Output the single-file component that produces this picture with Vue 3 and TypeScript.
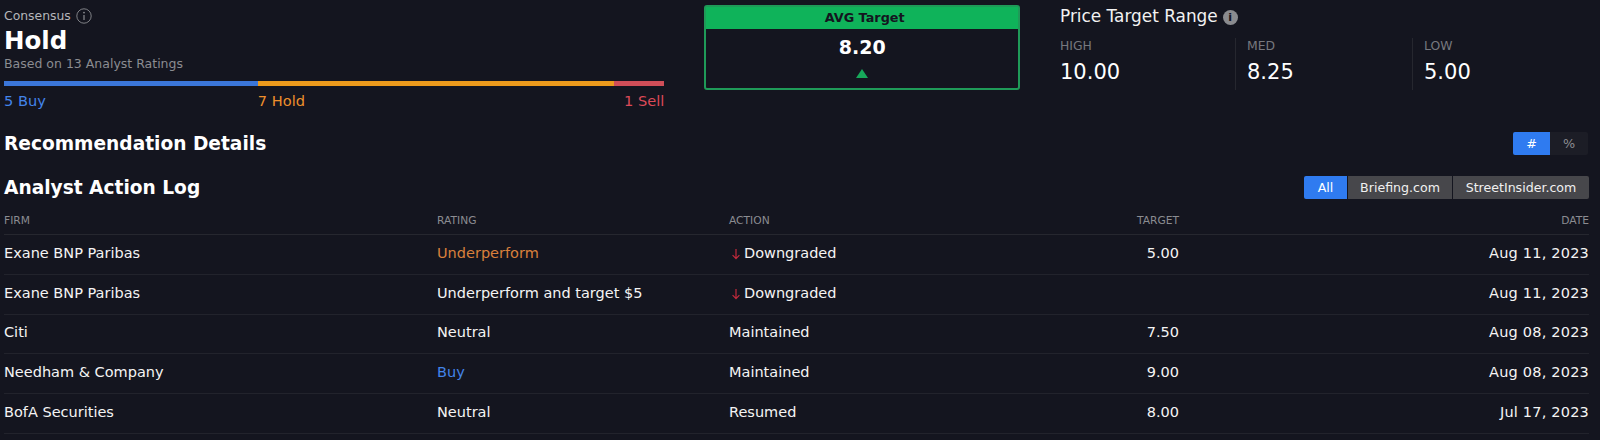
<script setup lang="ts">
interface Row { firm: string; rating: string; cls: string; action: string; down: boolean; target: string; date: string }
const rows: Row[] = [
  { firm: 'Exane BNP Paribas', rating: 'Underperform', cls: 'under', action: 'Downgraded', down: true, target: '5.00', date: 'Aug 11, 2023' },
  { firm: 'Exane BNP Paribas', rating: 'Underperform and target $5', cls: '', action: 'Downgraded', down: true, target: '', date: 'Aug 11, 2023' },
  { firm: 'Citi', rating: 'Neutral', cls: '', action: 'Maintained', down: false, target: '7.50', date: 'Aug 08, 2023' },
  { firm: 'Needham & Company', rating: 'Buy', cls: 'buy', action: 'Maintained', down: false, target: '9.00', date: 'Aug 08, 2023' },
  { firm: 'BofA Securities', rating: 'Neutral', cls: '', action: 'Resumed', down: false, target: '8.00', date: 'Jul 17, 2023' },
]
const ranges = [
  { label: 'HIGH', value: '10.00' },
  { label: 'MED', value: '8.25' },
  { label: 'LOW', value: '5.00' },
]
</script>

<template>
  <div class="page">
    <section class="top">
      <div class="consensus">
        <div class="cons-label">
          Consensus
          <svg class="info-o" viewBox="0 0 16 16" width="16" height="16">
            <circle cx="8" cy="8" r="7.2" fill="none" stroke="#8b8c91" stroke-width="0.9" />
            <circle cx="8" cy="4.6" r="0.9" fill="#8b8c91" />
            <path d="M8 7v5" stroke="#8b8c91" stroke-width="1.2" />
          </svg>
        </div>
        <div class="hold">Hold</div>
        <div class="based">Based on 13 Analyst Ratings</div>
        <div class="bar">
          <span class="seg s-buy"></span>
          <span class="seg s-hold"></span>
          <span class="seg s-sell"></span>
        </div>
        <div class="bar-labels">
          <span class="l-buy">5 Buy</span>
          <span class="l-hold">7 Hold</span>
          <span class="l-sell">1 Sell</span>
        </div>
      </div>
      <div class="avg">
        <div class="avg-head">AVG Target</div>
        <div class="avg-val">8.20</div>
        <div class="tri"></div>
      </div>
      <div class="range">
        <div class="range-title">
          Price Target Range
          <span class="info-f">i</span>
        </div>
        <div class="range-cols">
          <div v-for="r in ranges" :key="r.label" class="range-col">
            <div class="range-label">{{ r.label }}</div>
            <div class="range-val">{{ r.value }}</div>
          </div>
        </div>
      </div>
    </section>

    <div class="head-row rec">
      <h2>Recommendation Details</h2>
      <div class="toggle">
        <span class="t-on">#</span>
        <span class="t-off">%</span>
      </div>
    </div>

    <div class="head-row log">
      <h2>Analyst Action Log</h2>
      <div class="filters">
        <span class="f-on">All</span>
        <span class="f-off f-brief">Briefing.com</span>
        <span class="f-off f-street">StreetInsider.com</span>
      </div>
    </div>

    <div class="grid thead">
      <div>FIRM</div>
      <div>RATING</div>
      <div>ACTION</div>
      <div class="right">TARGET</div>
      <div class="right">DATE</div>
    </div>
    <div v-for="(r, i) in rows" :key="i" class="grid trow">
      <div>{{ r.firm }}</div>
      <div :class="r.cls">{{ r.rating }}</div>
      <div class="action">
        <span v-if="r.down" class="arrow">
          <svg viewBox="0 0 10 12" width="10" height="12">
            <path d="M5 1v9.5M1.6 7.2 5 10.6l3.4-3.4" fill="none" stroke="#c22a3c" stroke-width="1.2" />
          </svg>
        </span>{{ r.action }}
      </div>
      <div class="right">{{ r.target }}</div>
      <div class="right date">{{ r.date }}</div>
    </div>
  </div>
</template>

<style>
html, body { background: #14151f; }
</style>

<style scoped>
.page {
  width: 1600px;
  height: 440px;
  overflow: hidden;
  box-sizing: border-box;
  padding: 0 11px 0 4px;
  background: #14151f;
  color: #fff;
  font-family: "DejaVu Sans", Verdana, sans-serif;
  font-size: 14px;
}
.top { display: flex; height: 122px; }
.consensus { width: 661px; padding-top: 8px; box-sizing: border-box; }
.cons-label { display: flex; align-items: center; gap: 5px; font-size: 12.4px; line-height: 14px; color: #b5b6ba; }
.hold { font-size: 24.5px; font-weight: 700; line-height: 30px; margin-top: 2px; }
.based { font-size: 12.5px; line-height: 16px; color: #8b8c91; }
.bar { display: flex; height: 5px; margin-top: 9px; }
.seg { display: block; }
.s-buy { width: 254px; background: #3b76d9; }
.s-hold { width: 356px; background: #ec9a1c; }
.s-sell { flex: 1; background: #d04e58; }
.bar-labels { display: flex; font-size: 14.6px; line-height: 18px; margin-top: 6px; }
.l-hold { flex: 1; padding-left: 212px; }
.l-buy { color: #4384ea; }
.l-hold { color: #ee8f2c; }
.l-sell { color: #dc4a58; }
.avg {
  margin: 5px 0 0 40px;
  width: 316px;
  height: 85px;
  box-sizing: border-box;
  border: 2px solid #1f9a58;
  border-radius: 3px;
  display: flex;
  flex-direction: column;
  align-items: center;
}
.avg-head {
  align-self: stretch;
  box-sizing: border-box;
  padding-left: 5px;
  background: #0fb35a;
  color: #14151f;
  font-size: 12.8px;
  font-weight: 700;
  line-height: 22px;
  height: 22px;
  text-align: center;
}
.avg-val { font-size: 19px; font-weight: 700; line-height: 24px; margin-top: 6px; }
.tri {
  margin-top: 10px;
  width: 0;
  height: 0;
  border-left: 6px solid transparent;
  border-right: 6px solid transparent;
  border-bottom: 9px solid #17a85a;
}
.range { margin-left: 40px; flex: 1; padding-top: 5px; }
.range-title { display: flex; align-items: center; gap: 5px; font-size: 16.9px; line-height: 22px; color: #f2f2f2; }
.info-f {
  width: 15px; height: 15px; border-radius: 50%; background: #8a8b8f; color: #14151f;
  font-size: 11px; font-weight: 700; line-height: 15px; text-align: center; margin-top: 2px;
}
.range-cols { display: flex; margin-top: 11px; }
.range-col { width: 177px; height: 52px; box-sizing: border-box; padding-left: 11px; border-left: 1px solid #26272f; }
.range-col:first-child { width: 175px; padding-left: 0; border-left: 0; }
.range-label { font-size: 12.4px; line-height: 16px; color: #77787e; }
.range-val { font-size: 21px; line-height: 26px; margin-top: 5px; color: #fff; }
.head-row { display: flex; justify-content: space-between; align-items: center; }
.head-row h2 { margin: 0; padding-top: 1px; font-size: 18.6px; font-weight: 700; line-height: 24px; }
.rec { height: 26px; margin-top: 8px; }
.log { height: 26px; margin-top: 18px; }
.toggle { display: flex; font-size: 12.8px; height: 23px; line-height: 23px; text-align: center; margin-right: 1px; }
.t-on { width: 37px; background: #2f7bf0; color: #fff; border-radius: 2px 0 0 2px; }
.t-off { width: 38px; background: #1c1d26; color: #8b8c91; border-radius: 0 2px 2px 0; }
.filters { display: flex; gap: 1px; font-size: 12.6px; height: 23px; line-height: 23px; text-align: center; }
.f-on { width: 43px; background: #2f7bf0; color: #fff; border-radius: 2px 0 0 2px; }
.f-off { background: #47474b; color: #f0f0f0; }
.f-brief { width: 104px; }
.f-street { width: 136px; border-radius: 0 2px 2px 0; }
.grid { display: grid; grid-template-columns: 433px 292px 1fr 140px 410px; align-items: center; }
.right { text-align: right; }
.thead { height: 35px; padding-top: 7px; font-size: 10.7px; color: #8b8c91; border-bottom: 1px solid #26272f; box-sizing: border-box; }
.trow { height: 39.8px; padding-bottom: 3px; font-size: 14.5px; border-bottom: 1px solid #22232c; box-sizing: border-box; color: #f4f4f4; }
.date { letter-spacing: 0.2px; }
.under { color: #d9803c; }
.buy { color: #4384ea; }
.action { display: flex; align-items: center; }
.arrow { display: inline-flex; margin: 3px 3px 0 2px; }
</style>
